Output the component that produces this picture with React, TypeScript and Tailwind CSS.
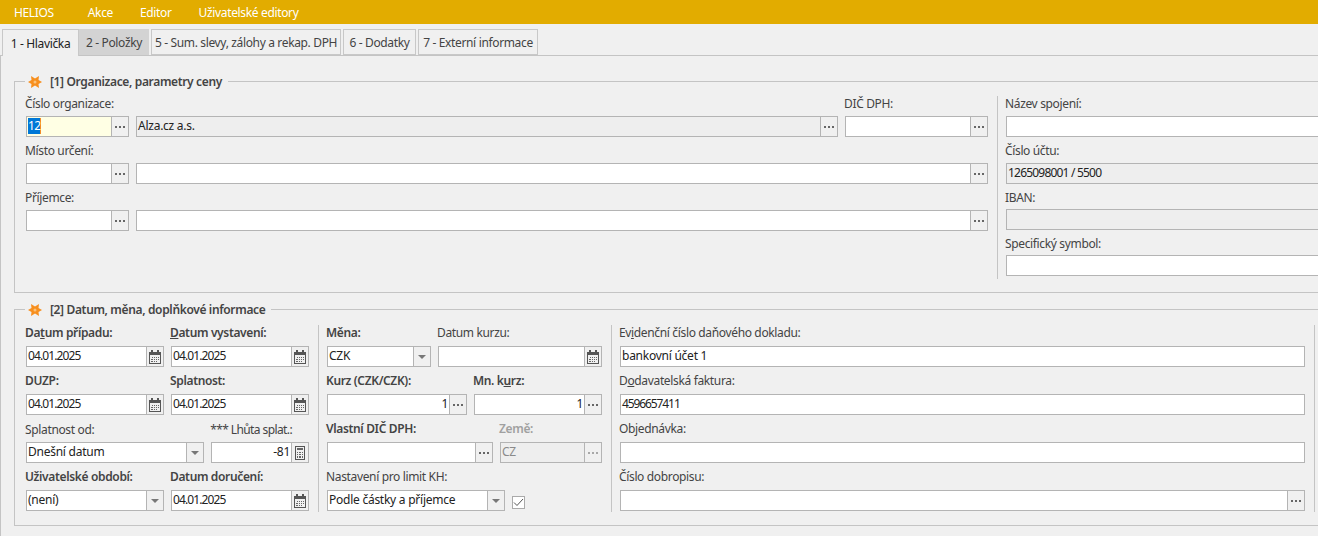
import type { ReactNode } from "react";

type BtnKind = "dots" | "cal" | "calc" | "arrow";

const Dots = ({ faded }: { faded?: boolean }) => (
  <svg width="10" height="2" viewBox="0 0 10 2">
    <g fill={faded ? "#a8a8a8" : "#666666"}>
      <rect x="0" width="2" height="2" />
      <rect x="4" width="2" height="2" />
      <rect x="8" width="2" height="2" />
    </g>
  </svg>
);

const CalendarIcon = () => (
  <svg width="12" height="14" viewBox="0 0 12 14" fill="none">
    <rect x="0.5" y="2.5" width="11" height="11" stroke="#555555" />
    <rect x="1" y="2" width="10" height="3" fill="#555555" />
    <rect x="2" y="0" width="2" height="3" fill="#555555" />
    <rect x="8" y="0" width="2" height="3" fill="#555555" />
    <g fill="#666666">
      <rect x="3" y="7" width="1" height="1" />
      <rect x="5" y="7" width="1" height="1" />
      <rect x="7" y="7" width="1" height="1" />
      <rect x="9" y="7" width="1" height="1" />
      <rect x="2" y="9" width="2" height="1" />
      <rect x="5" y="9" width="1" height="1" />
      <rect x="7" y="9" width="1" height="1" />
      <rect x="9" y="9" width="1" height="1" />
      <rect x="2" y="11" width="2" height="1" />
      <rect x="5" y="11" width="1" height="1" />
      <rect x="7" y="11" width="1" height="1" />
    </g>
  </svg>
);

const CalcIcon = () => (
  <svg width="10" height="14" viewBox="0 0 10 14" fill="none">
    <rect x="0.5" y="0.5" width="9" height="13" stroke="#555555" />
    <rect x="2" y="2" width="6" height="2" fill="#666666" />
    <g fill="#666666">
      <rect x="2" y="6" width="1" height="1" />
      <rect x="4" y="6" width="2" height="1" />
      <rect x="7" y="6" width="1" height="1" />
      <rect x="2" y="8" width="1" height="1" />
      <rect x="4" y="8" width="2" height="1" />
      <rect x="7" y="8" width="1" height="1" />
      <rect x="2" y="10" width="1" height="2" />
      <rect x="4" y="10" width="2" height="2" />
      <rect x="7" y="10" width="1" height="2" />
    </g>
  </svg>
);

const StarIcon = () => (
  <svg width="14" height="14" viewBox="0 0 14 14">
    <path d="M3 1 L7 3.5 L11 1 L10.5 5 L14 7 L10.5 9 L11 13 L7 10.5 L3 13 L3.5 9 L0 7 L3.5 5 Z" fill="#f78f1e" />
    <circle cx="7" cy="7" r="1.5" fill="#fbc27a" />
  </svg>
);

const BtnIcon = ({ kind, faded }: { kind: BtnKind; faded?: boolean }) => {
  if (kind === "cal") return <CalendarIcon />;
  if (kind === "calc") return <CalcIcon />;
  if (kind === "arrow") return <span className="w-0 h-0 border-x-[4px] border-x-transparent border-t-[4px] border-t-[#777777]" />;
  return <Dots faded={faded} />;
};

// digits are narrower in the original font
const Num = ({ children }: { children: ReactNode }) => <span className="tracking-[-0.9px]">{children}</span>;

interface BoxProps {
  value?: ReactNode;
  btn?: BtnKind;
  right?: boolean;
  readOnly?: boolean;
  disabled?: boolean;
  focus?: boolean;
}

// one bordered edit line, optionally with a button on the right
const Box = ({ value, btn, right, readOnly, disabled, focus }: BoxProps) => (
  <div
    className={`flex h-[21px] border border-[#b4b4b4] ${
      focus ? "bg-[#ffffe4]" : readOnly || disabled ? "bg-[#eeeeee]" : "bg-white"
    }`}
  >
    <div
      className={`flex-1 min-w-0 flex items-center px-px pb-px whitespace-nowrap tracking-[-0.25px] ${right ? "justify-end" : ""} ${
        disabled ? "text-[#8a8a8a]" : "text-[#222222]"
      }`}
    >
      {value}
    </div>
    {btn && (
      <div className="w-[17px] shrink-0 flex items-center justify-center border-l border-[#b4b4b4] bg-[#f0f0f0]">
        <BtnIcon kind={btn} faded={disabled} />
      </div>
    )}
  </div>
);

interface FieldProps extends BoxProps {
  label?: ReactNode;
  className?: string;
  bold?: boolean;
  compact?: boolean;
  low?: boolean;
  labelRight?: boolean;
  labelMuted?: boolean;
}

const Field = ({ label, className, bold, compact, low, labelRight, labelMuted, ...box }: FieldProps) => (
  <div className={className}>
    <div
      className={`flex items-center -ml-px whitespace-nowrap ${compact ? "h-[25px]" : "h-[26px]"} ${low ? "pt-[2px]" : ""} ${
        bold ? "font-semibold" : ""
      } ${labelRight ? "justify-end pr-[17px] tracking-[-0.6px]" : ""} ${labelMuted ? "text-[#a0a0a0]" : "text-[#444444]"}`}
    >
      <span>{label}</span>
    </div>
    <Box {...box} />
  </div>
);

const Group = ({ title, children, className }: { title: string; children: ReactNode; className: string }) => (
  <div className={`relative w-[1320px] border border-[#c4c4c4] ${className}`}>
    <div className="absolute -top-[9px] left-[10px] h-[18px] flex items-center gap-[8px] pl-[3px] pr-[6px] bg-[#f0f0f0] font-semibold text-[#444444]">
      <StarIcon />
      <span>{title}</span>
    </div>
    {children}
  </div>
);

const tabs = [
  { label: "2 - Položky", w: "w-[70px] bg-[#d3d3d3] border-[#d3d3d3] mr-[2px]" },
  { label: "5 - Sum. slevy, zálohy a rekap. DPH", w: "w-[190px] border-[#c8c8c8] mr-[2px]" },
  { label: "6 - Dodatky", w: "w-[73px] border-[#c8c8c8] mr-[2px]" },
  { label: "7 - Externí informace", w: "w-[120px] border-[#c8c8c8]" },
];

export default function App() {
  return (
    <div className="w-[1318px] h-[536px] overflow-hidden flex flex-col bg-[#f0f0f0] text-[12px] tracking-[-0.35px] font-['Noto_Sans',sans-serif]">
      <div className="h-6 shrink-0 flex items-center gap-[27px] pl-[14px] pt-px bg-[#e2ac00] text-white">
        <span className="mr-[7px]">HELIOS</span>
        <span>Akce</span>
        <span>Editor</span>
        <span>Uživatelské editory</span>
      </div>

      <div className="h-8 shrink-0 flex items-end pl-[2px] border-b border-[#c4c4c4] text-[#444444]">
        <div className="w-[77px] h-[27px] -mb-px pt-px flex items-center justify-center border border-b-0 border-[#c8c8c8] bg-[#f0f0f0] text-[#222222]">
          1 - Hlavička
        </div>
        {tabs.map((t) => (
          <div key={t.label} className={`h-[26px] pt-px flex items-center justify-center border whitespace-nowrap ${t.w}`}>
            {t.label}
          </div>
        ))}
      </div>

      <div className="flex-1 border-l border-[#c4c4c4] pl-[13px] pt-[25px]">
        <Group title="[1] Organizace, parametry ceny" className="h-[212px] flex pt-2 pl-[11px] border-r-0">
          <div className="w-[962px] shrink-0">
            <div className="flex gap-[7px]">
              <Field
                label="Číslo organizace:"
                low
                className="w-[103px] shrink-0"
                focus
                btn="dots"
                value={
                  <span className="h-[16px] w-[13px] flex items-center bg-[#0078d7] text-white border-r border-[#f28c28] tracking-[-0.6px]">12</span>
                }
              />
              <Field label="" className="flex-1" readOnly btn="dots" value="Alza.cz a.s." />
              <Field label="DIČ DPH:" low className="w-[143px] shrink-0" btn="dots" />
            </div>
            <div className="flex gap-[7px]">
              <Field label="Místo určení:" low className="w-[103px] shrink-0" btn="dots" />
              <Field label="" className="flex-1" btn="dots" />
            </div>
            <div className="flex gap-[7px]">
              <Field label="Příjemce:" low className="w-[103px] shrink-0" btn="dots" />
              <Field label="" className="flex-1" btn="dots" />
            </div>
          </div>
          <div className="w-px h-[183px] mt-[6px] ml-[9px] bg-[#c4c4c4]" />
          <div className="w-[320px] ml-2">
            <Field label="Název spojení:" low />
            <Field label="Číslo účtu:" low readOnly value={<span className="tracking-[-0.8px]">1265098001 / 5500</span>} />
            <Field label="IBAN:" low compact readOnly />
            <Field label="Specifický symbol:" low compact />
          </div>
        </Group>

        <Group title="[2] Datum, měna, doplňkové informace" className="h-[217px] mt-4 flex pt-[10px] pl-[11px] border-r-0">
          <div className="w-[283px] shrink-0 flex flex-col gap-px">
            <div className="flex gap-[7px]">
              <Field label={<>Da<u>t</u>um případu:</>} bold className="w-[138px]" btn="cal" value={<Num>04.01.2025</Num>} />
              <Field label={<><u>D</u>atum vystavení:</>} bold className="w-[138px]" btn="cal" value={<Num>04.01.2025</Num>} />
            </div>
            <div className="flex gap-[7px]">
              <Field label="DUZP:" bold className="w-[138px]" btn="cal" value={<Num>04.01.2025</Num>} />
              <Field label="Splatnost:" bold className="w-[138px]" btn="cal" value={<Num>04.01.2025</Num>} />
            </div>
            <div className="flex gap-[7px]">
              <Field label="Splatnost od:" low className="w-[178px]" btn="arrow" value="Dnešní datum" />
              <Field label="*** Lhůta splat.:" low labelRight className="w-[98px]" btn="calc" right value="-81" />
            </div>
            <div className="flex gap-[7px]">
              <Field label="Uživatelské období:" bold className="w-[138px]" btn="arrow" value="(není)" />
              <Field label="Datum doručení:" bold className="w-[138px]" btn="cal" value={<Num>04.01.2025</Num>} />
            </div>
          </div>
          <div className="w-px h-[187px] mt-[5px] ml-[9px] bg-[#c4c4c4]" />
          <div className="w-[275px] shrink-0 ml-2 flex flex-col gap-px">
            <div className="flex gap-[7px]">
              <Field label="Měna:" bold className="w-[104px]" btn="arrow" value="CZK" />
              <Field label="Datum kurzu:" className="w-[164px]" btn="cal" />
            </div>
            <div className="flex gap-[7px]">
              <Field label="Kurz (CZK/CZK):" bold className="w-[140px]" btn="dots" right value="1" />
              <Field label={<>Mn. k<u>u</u>rz:</>} bold className="w-[128px]" btn="dots" right value="1" />
            </div>
            <div className="flex gap-[7px]">
              <Field label="Vlastní DIČ DPH:" bold className="w-[166px]" btn="dots" />
              <Field label="Země:" bold labelMuted className="w-[102px]" disabled btn="dots" value="CZ" />
            </div>
            <div className="flex gap-[7px]">
              <Field label="Nastavení pro limit KH:" className="w-[178px]" btn="arrow" value="Podle částky a příjemce" />
              <div className="self-end mb-[2px] w-[13px] h-[13px] flex items-center justify-center border border-[#aaaaaa] bg-white">
                <svg width="11" height="9" viewBox="0 0 11 9" fill="none">
                  <path d="M1 4.5 L4 7.5 L10 1" stroke="#555555" strokeWidth="1" />
                </svg>
              </div>
            </div>
          </div>
          <div className="w-px h-[187px] mt-[5px] ml-[9px] bg-[#c4c4c4]" />
          <div className="w-[685px] shrink-0 ml-2 flex flex-col gap-px">
            <Field label={<>Ev<u>i</u>denční číslo daňového dokladu:</>} value="bankovní účet 1" />
            <Field label={<>D<u>o</u>davatelská faktura:</>} value={<span className="tracking-[-1.1px]">4596657411</span>} />
            <Field label="Objednávka:" />
            <Field label="Číslo dobropisu:" btn="dots" />
          </div>
          <div className="w-px h-[187px] mt-[5px] ml-[9px] bg-[#c4c4c4]" />
        </Group>
      </div>
    </div>
  );
}
